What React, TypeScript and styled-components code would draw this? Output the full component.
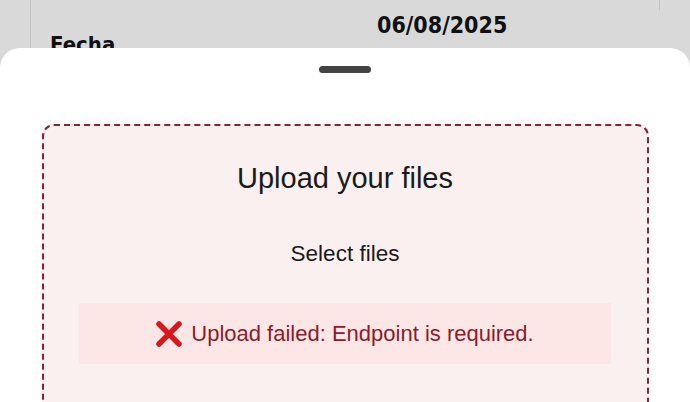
import styled, { createGlobalStyle } from "styled-components";

const GlobalStyle = createGlobalStyle`
  html, body {
    margin: 0;
    padding: 0;
    width: 690px;
    height: 402px;
    overflow: hidden;
    background: #d9d9d9;
  }
  #root {
    height: 402px;
  }
`;

const Backdrop = styled.div`
  position: relative;
  height: 402px;
  background: #d9d9d9;
  overflow: hidden;
`;

const Card = styled.div`
  margin: 0 30px 0 30px;
  height: 402px;
  border-left: 1px solid #c2c2c2;
  position: relative;
  &::after {
    content: "";
    position: absolute;
    right: 0;
    top: 0;
    width: 1px;
    height: 10px;
    background: #c2c2c2;
  }
`;

const Row = styled.div`
  display: grid;
  grid-template-columns: 327px 1fr;
  padding: 12px 0 0 19px;
  font-family: "DejaVu Sans Condensed", "DejaVu Sans", sans-serif;
  color: #111;
`;

const Label = styled.div`
  font-size: 22px;
  font-weight: 600;
  padding-top: 20px;
`;

const Value = styled.div`
  font-size: 23px;
  font-weight: 600;
`;

const Sheet = styled.div`
  position: absolute;
  left: 0;
  right: 0;
  top: 48px;
  bottom: 0;
  background: #ffffff;
  border-radius: 20px 20px 0 0;
  display: flex;
  flex-direction: column;
  align-items: center;
`;

const Handle = styled.div`
  width: 52px;
  height: 7px;
  border-radius: 4px;
  background: #444444;
  margin-top: 18px;
`;

const DropZone = styled.div`
  box-sizing: border-box;
  margin-top: 51px;
  width: 607px;
  flex: 1;
  border: 2px dashed #8a2233;
  border-bottom: none;
  border-radius: 12px 12px 0 0;
  background: #faf0ef;
  display: flex;
  flex-direction: column;
  align-items: center;
  font-family: "Liberation Sans", Arial, sans-serif;
  color: #1a1a1a;
`;

const Title = styled.h2`
  margin: 32px 0 0 0;
  font-size: 29px;
  font-weight: 400;
  line-height: 40px;
`;

const SelectLink = styled.div`
  margin-top: 43px;
  font-size: 22.5px;
  line-height: 26px;
`;

const ErrorBox = styled.div`
  box-sizing: border-box;
  margin-top: 36px;
  width: 532px;
  height: 61px;
  background: #fce6e6;
  display: flex;
  align-items: center;
  justify-content: center;
  gap: 9px;
  color: #8a1c2b;
  font-size: 22px;
`;

const ErrorIcon = () => (
  <svg width="26" height="26" viewBox="0 0 26 26">
    <path
      d="M3 3 L23 23 M23 3 L3 23"
      stroke="#d7171f"
      strokeWidth="5.5"
      strokeLinecap="round"
    />
  </svg>
);

export default function App() {
  return (
    <>
      <GlobalStyle />
      <Backdrop>
        <Card>
          <Row>
            <Label>Fecha</Label>
            <Value>06/08/2025</Value>
          </Row>
        </Card>
        <Sheet>
          <Handle />
          <DropZone>
            <Title>Upload your files</Title>
            <SelectLink>Select files</SelectLink>
            <ErrorBox>
              <ErrorIcon />
              <span>Upload failed: Endpoint is required.</span>
            </ErrorBox>
          </DropZone>
        </Sheet>
      </Backdrop>
    </>
  );
}
